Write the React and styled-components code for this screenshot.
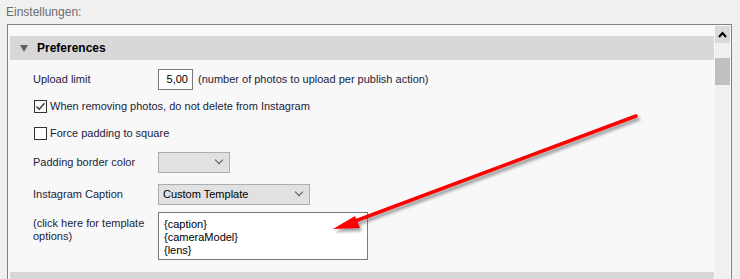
import React from "react";
import styled, { createGlobalStyle } from "styled-components";

const GlobalStyle = createGlobalStyle`
  html, body {
    margin: 0;
    padding: 0;
    background: #f0f0f0;
    font-family: "Liberation Sans", Arial, sans-serif;
    font-size: 11px;
    color: #1c1c3a;
    overflow: hidden;
  }
`;

export default function App() {
  return (
    <Page>
      <GlobalStyle />
      <Title>Einstellungen:</Title>
      <Panel>
        <Content>
          <SectionHeader>
            <Triangle />
            <HeaderText>Preferences</HeaderText>
          </SectionHeader>

          <Row mt={7}>
            <Label>Upload limit</Label>
            <NumberBox>5,00</NumberBox>
            <Hint>(number of photos to upload per publish action)</Hint>
          </Row>

          <Row mt={3}>
            <Check checked>
              <svg width="11" height="11" viewBox="0 0 11 11">
                <path d="M1.5 5.5 L4.2 8.2 L9.5 2.2" fill="none" stroke="#333" strokeWidth="1.3" />
              </svg>
            </Check>
            <CheckText>When removing photos, do not delete from Instagram</CheckText>
          </Row>

          <Row mt={3}>
            <Check />
            <CheckText>Force padding to square</CheckText>
          </Row>

          <Row mt={5}>
            <Label>Padding border color</Label>
            <Select w={72}>
              <span></span>
              <Chevron />
            </Select>
          </Row>

          <Row mt={8}>
            <Label>Instagram Caption</Label>
            <Select w={152}>
              <span>Custom Template</span>
              <Chevron />
            </Select>
          </Row>

          <Row mt={6} top>
            <Label multi>(click here for template options)</Label>
            <TextArea>
              <div>{"{caption}"}</div>
              <div>{"{cameraModel}"}</div>
              <div>{"{lens}"}</div>
            </TextArea>
          </Row>

          <SectionHeader gap={12} />
        </Content>
        <ScrollBar>
          <ScrollButton>
            <svg width="9" height="7" viewBox="0 0 9 7">
              <path d="M1 6 L4.5 2 L8 6" fill="none" stroke="#000" strokeWidth="2" />
            </svg>
          </ScrollButton>
          <Thumb />
        </ScrollBar>
      </Panel>

      <Overlay width="740" height="279" viewBox="0 0 740 279">
        <defs>
          <filter id="sh" x="-10%" y="-10%" width="130%" height="140%">
            <feGaussianBlur stdDeviation="1.6" />
          </filter>
        </defs>
        <g transform="translate(2 3)" opacity="0.55" filter="url(#sh)">
          <path d="M636 116 L350 223" stroke="#555" strokeWidth="4" strokeLinecap="round" />
          <path d="M333 229 L355 216 L360 228 Z" fill="#555" />
        </g>
        <path d="M636 116 L350 223" stroke="#ff0000" strokeWidth="3.5" strokeLinecap="round" />
        <path d="M333 229 L355 216 L360 228 Z" fill="#ff0000" />
      </Overlay>
    </Page>
  );
}

const Page = styled.div`
  position: relative;
  width: 740px;
  height: 279px;
  overflow: hidden;
`;

const Title = styled.div`
  height: 24px;
  line-height: 24px;
  padding-left: 6px;
  color: #6d6d6d;
  font-size: 12px;
`;

const Panel = styled.div`
  display: flex;
  margin-left: 7px;
  width: 723px;
  height: 260px;
  border: 1px solid #828282;
  border-bottom: none;
  background: #f8f8f8;
`;

const Content = styled.div`
  flex: 1;
  display: flex;
  flex-direction: column;
  padding-top: 11px;
  padding-left: 2px;
  padding-right: 1px;
`;

const SectionHeader = styled.div`
  display: flex;
  align-items: center;
  flex-shrink: 0;
  height: 24px;
  margin-top: ${(p) => p.gap || 0}px;
  background: #d8d8d8;
`;

const Triangle = styled.div`
  width: 0;
  height: 0;
  margin-left: 10px;
  border-left: 4px solid transparent;
  border-right: 4px solid transparent;
  border-top: 7px solid #616161;
`;

const HeaderText = styled.div`
  margin-left: 9px;
  font-weight: bold;
  font-size: 12px;
  color: #000;
`;

const Row = styled.div`
  display: flex;
  align-items: ${(p) => (p.top ? "flex-start" : "center")};
  min-height: 24px;
  margin-top: ${(p) => p.mt}px;
  flex-shrink: 0;
  padding-left: 23px;
`;

const Label = styled.div`
  width: 125px;
  flex-shrink: 0;
  line-height: 13px;
  padding-top: ${(p) => (p.multi ? "5px" : "0")};
  white-space: ${(p) => (p.multi ? "normal" : "nowrap")};
  box-sizing: border-box;
`;

const NumberBox = styled.div`
  width: 35px;
  height: 21px;
  box-sizing: border-box;
  border: 1px solid #7a7a7a;
  background: #fff;
  text-align: right;
  line-height: 19px;
  padding-right: 4px;
  color: #000;
`;

const Hint = styled.div`
  margin-left: 5px;
  white-space: nowrap;
`;

const Check = styled.div`
  width: 13px;
  height: 13px;
  box-sizing: border-box;
  margin-left: 1px;
  border: 1px solid #333;
  background: ${(p) => (p.checked ? "#f8f8f8" : "#fff")};
  display: flex;
  align-items: center;
  justify-content: center;
`;

const CheckText = styled.div`
  margin-left: 3px;
  white-space: nowrap;
`;

const Select = styled.div`
  display: flex;
  align-items: center;
  justify-content: space-between;
  width: ${(p) => p.w}px;
  height: 21px;
  box-sizing: border-box;
  border: 1px solid #adadad;
  background: #e1e1e1;
  padding: 0 7px 0 4px;
  color: #000;
`;

const Chevron = styled.div`
  width: 5px;
  height: 5px;
  margin-top: -4px;
  border-right: 1px solid #555;
  border-bottom: 1px solid #555;
  transform: rotate(45deg);
`;

const TextArea = styled.div`
  width: 210px;
  height: 48px;
  box-sizing: border-box;
  border: 1px solid #7a7a7a;
  background: #fff;
  padding: 5px 5px;
  line-height: 13px;
  color: #000;
`;

const ScrollBar = styled.div`
  width: 15px;
  margin-right: 1px;
  margin-top: 1px;
  background: #f0f0f0;
  display: flex;
  flex-direction: column;
`;

const ScrollButton = styled.div`
  height: 17px;
  background: #dadada;
  display: flex;
  align-items: center;
  justify-content: center;
`;

const Thumb = styled.div`
  margin-top: 15px;
  height: 27px;
  background: #c0c0c0;
`;

const Overlay = styled.svg`
  position: absolute;
  left: 0;
  top: 0;
  pointer-events: none;
`;
